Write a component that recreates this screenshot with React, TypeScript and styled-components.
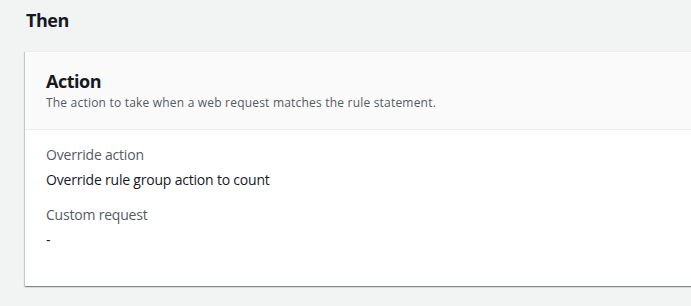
import React from 'react';
import styled, { createGlobalStyle } from 'styled-components';

const GlobalStyle = createGlobalStyle`
  html, body {
    margin: 0;
    padding: 0;
    background: #f2f3f3;
    overflow: hidden;
  }
  body {
    font-family: "Open Sans", "Liberation Sans", Arial, sans-serif;
    color: #16191f;
  }
`;

const Page = styled.div`
  width: 691px;
  height: 306px;
  padding: 9px 0 0 25px;
  box-sizing: border-box;
`;

const SectionTitle = styled.h2`
  margin: 0 0 20px 1px;
  font-size: 18px;
  line-height: 22px;
  font-weight: 700;
  letter-spacing: -0.5px;
  color: #16191f;
`;

const Card = styled.div`
  width: 700px;
  background: #ffffff;
  border-top: 1px solid #eaeded;
  box-shadow: 0 1px 1px 0 rgba(0, 28, 36, 0.3), 1px 1px 1px 0 rgba(0, 28, 36, 0.15),
    -1px 1px 1px 0 rgba(0, 28, 36, 0.15);
`;

const CardHeader = styled.div`
  background: #fafafa;
  border-bottom: 1px solid #eaeded;
  padding: 18px 20px 18px 21px;
`;

const CardTitle = styled.h3`
  margin: 0;
  font-size: 18px;
  line-height: 22px;
  font-weight: 700;
  letter-spacing: -0.5px;
  color: #16191f;
`;

const CardDescription = styled.p`
  margin: 3px 0 0;
  font-size: 12px;
  line-height: 16px;
  letter-spacing: 0.2px;
  color: #545b64;
`;

const CardBody = styled.dl`
  margin: 0;
  padding: 14px 20px 35px 21px;
  display: flex;
  flex-direction: column;
  gap: 13px;
`;

const Field = styled.div`
  display: flex;
  flex-direction: column;
  gap: 3px;
`;

const Label = styled.dt`
  font-size: 14px;
  line-height: 22px;
  letter-spacing: -0.2px;
  color: #545b64;
`;

const Value = styled.dd`
  margin: 0;
  font-size: 14px;
  line-height: 22px;
  letter-spacing: -0.2px;
  color: #16191f;
`;

const fields = [
  { label: 'Override action', value: 'Override rule group action to count' },
  { label: 'Custom request', value: '-' },
];

const App: React.FC = () => (
  <>
    <GlobalStyle />
    <Page>
      <SectionTitle>Then</SectionTitle>
      <Card>
        <CardHeader>
          <CardTitle>Action</CardTitle>
          <CardDescription>The action to take when a web request matches the rule statement.</CardDescription>
        </CardHeader>
        <CardBody>
          {fields.map((f) => (
            <Field key={f.label}>
              <Label>{f.label}</Label>
              <Value>{f.value}</Value>
            </Field>
          ))}
        </CardBody>
      </Card>
    </Page>
  </>
);

export default App;
